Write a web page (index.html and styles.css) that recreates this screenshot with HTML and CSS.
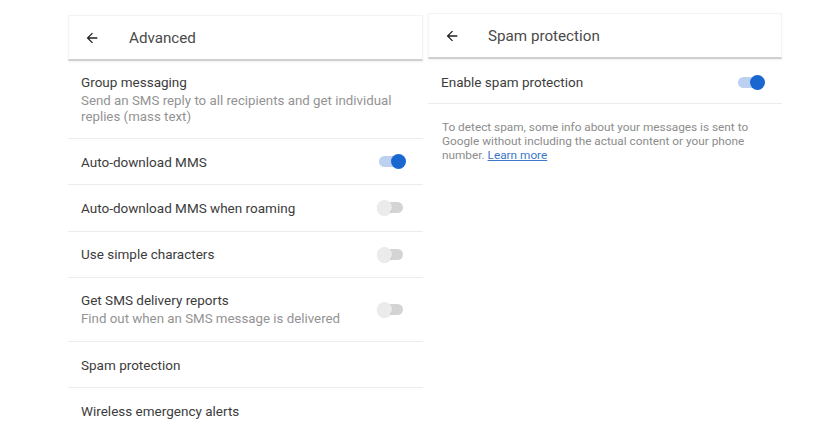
FILE: index.html
```html
<!DOCTYPE html>
<html>
<head>
<meta charset="utf-8">
<link rel="stylesheet" href="styles.css">
</head>
<body>
<div class="page">
  <section class="panel left">
    <header class="bar">
      <svg class="back" viewBox="0 0 24 24" width="16" height="16"><path d="M20 11H7.83l5.59-5.59L12 4l-8 8 8 8 1.41-1.41L7.83 13H20v-2z" fill="#222"/></svg>
      <span class="bar-title">Advanced</span>
    </header>
    <div class="row two">
      <div class="texts">
        <div class="title">Group messaging</div>
        <div class="sub">Send an SMS reply to all recipients and get individual replies (mass text)</div>
      </div>
    </div>
    <div class="row">
      <div class="texts"><div class="title">Auto-download MMS</div></div>
      <span class="toggle on"><span class="knob"></span></span>
    </div>
    <div class="row">
      <div class="texts"><div class="title">Auto-download MMS when roaming</div></div>
      <span class="toggle"><span class="knob"></span></span>
    </div>
    <div class="row">
      <div class="texts"><div class="title">Use simple characters</div></div>
      <span class="toggle"><span class="knob"></span></span>
    </div>
    <div class="row tall">
      <div class="texts">
        <div class="title">Get SMS delivery reports</div>
        <div class="sub">Find out when an SMS message is delivered</div>
      </div>
      <span class="toggle"><span class="knob"></span></span>
    </div>
    <div class="row">
      <div class="texts"><div class="title">Spam protection</div></div>
    </div>
    <div class="row last">
      <div class="texts"><div class="title">Wireless emergency alerts</div></div>
    </div>
  </section>
  <section class="panel right">
    <header class="bar">
      <svg class="back" viewBox="0 0 24 24" width="16" height="16"><path d="M20 11H7.83l5.59-5.59L12 4l-8 8 8 8 1.41-1.41L7.83 13H20v-2z" fill="#222"/></svg>
      <span class="bar-title">Spam protection</span>
    </header>
    <div class="row">
      <div class="texts"><div class="title">Enable spam protection</div></div>
      <span class="toggle on"><span class="knob"></span></span>
    </div>
    <p class="desc">To detect spam, some info about your messages is sent to Google without including the actual content or your phone number.&nbsp;<a class="learn" href="#">Learn more</a></p>
  </section>
</div>
</body>
</html>
```
FILE: styles.css
```css
* { box-sizing: border-box; }
html, body { margin: 0; padding: 0; background: #fff; }
body { font-family: Roboto, "Noto Sans", sans-serif; color: #333; }
.page {
  display: flex;
  gap: 5px;
  padding-left: 68px;
  width: 822px;
  height: 430px;
  overflow: hidden;
}
.panel { width: 355px; display: flex; flex-direction: column; flex: none; }
.left { padding-top: 15px; }
.right { padding-top: 13px; width: 354px; }
.bar {
  height: 46px;
  flex: none;
  display: flex;
  align-items: center;
  border: 1px solid #f3f3f3;
  border-bottom: 2px solid #cfcfcf;
  box-shadow: 0 1px 2px rgba(0,0,0,0.06);
  padding-left: 15px;
}
.back { margin-right: 29px; }
.right .back { margin-right: 28px; }
.bar-title { font-size: 15.2px; color: #4a4a4a; }
.row {
  flex: none;
  display: flex;
  align-items: center;
  justify-content: space-between;
  height: 46.3px;
  border-bottom: 1px solid #ececec;
  padding: 0 20px 0 13px;
}
.row.two { height: 78px; padding-top: 0; }
.row.tall { height: 64px; }
.row.last { border-bottom: none; }
.right .row { height: 45px; padding-top: 2px; }
.title { font-size: 13.5px; color: #3c3c3c; }
.sub { font-size: 13.3px; color: #939393; line-height: 16px; margin-top: 3px; }
.two .sub { width: 330px; }
.toggle {
  position: relative;
  width: 24px;
  height: 11px;
  border-radius: 6px;
  background: #d4d4d4;
  flex: none;
}
.toggle .knob {
  position: absolute;
  top: -2px;
  left: -2px;
  width: 15px;
  height: 15px;
  border-radius: 50%;
  background: #ebebeb;
  box-shadow: 0 1px 1px rgba(0,0,0,0.1);
}
.toggle.on { background: #bcd0ef; }
.toggle.on .knob { left: 12px; background: #1a67d2; box-shadow: none; }
.desc {
  margin: 16px 0 0;
  padding: 0 14px;
  font-size: 11.8px;
  line-height: 14px;
  color: #8c8c8c;
}
.learn { display: inline-block; color: #3b78c8; text-decoration: underline; }
```
